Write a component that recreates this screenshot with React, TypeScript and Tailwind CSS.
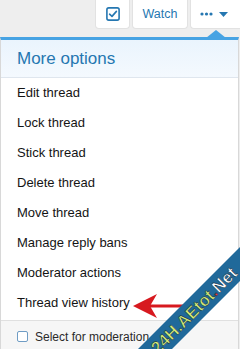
import React from 'react';

const items = [
  'Edit thread',
  'Lock thread',
  'Stick thread',
  'Delete thread',
  'Move thread',
  'Manage reply bans',
  'Moderator actions',
  'Thread view history',
];

function CheckSquare() {
  return (
    <svg width="14" height="14" viewBox="0 0 14 14" fill="none">
      <rect x="0.9" y="0.9" width="12.2" height="12.2" rx="1.8" stroke="#2577b1" strokeWidth="1.6" />
      <path d="M3.6 7.2 L6 9.4 L10.4 4.4" stroke="#2577b1" strokeWidth="1.6" strokeLinecap="round" strokeLinejoin="round" />
    </svg>
  );
}

function RedArrow() {
  return (
    <svg width="56" height="28" viewBox="0 0 56 28" className="absolute left-[131px] top-[292px]">
      <path d="M17 12.5 H52 V15.5 H17 Z" fill="#d7191f" />
      <path d="M2 14 L26 2 L19 14 L26 26 Z" fill="#d7191f" />
    </svg>
  );
}

function Watermark() {
  return (
    <div className="pointer-events-none absolute left-[72px] top-[300px] flex h-[24px] w-[240px] -rotate-45 items-center bg-[#20699a] pl-[66px]">
      <span
        className="whitespace-nowrap text-[17px] font-bold leading-none [font-family:'Liberation_Sans',Arial,sans-serif]"
        style={{ WebkitTextStroke: '0.6px #0d3550' }}
      >
        <span className="text-[#d6ec74]">24H.AEtot</span>
        <span className="text-[#e8413a]">.</span>
        <span className="text-white">Net</span>
      </span>
    </div>
  );
}

export default function App() {
  return (
    <div className="relative h-[349px] w-[240px] overflow-hidden bg-[#eeeeee] [font-family:'Liberation_Sans',Arial,sans-serif]">
      {/* top bar */}
      <div className="flex h-[37px] justify-end gap-[2px]">
        <div className="flex h-[29px] w-[35px] items-center justify-center rounded-b-[4px] border border-t-0 border-[#e2e2e2] bg-white">
          <CheckSquare />
        </div>
        <div className="flex h-[29px] w-[56px] items-center justify-center rounded-b-[4px] border border-t-0 border-[#e2e2e2] bg-white text-[12.5px] text-[#2577b1]">
          Watch
        </div>
        <div className="relative flex h-[29px] w-[50px] items-center justify-start gap-[6px] rounded-bl-[4px] border border-r-0 border-t-0 border-[#e2e2e2] bg-white pl-[9px] text-[#2577b1]">
          <svg width="13" height="4" viewBox="0 0 13 4">
            <circle cx="2" cy="2" r="1.6" fill="#2577b1" />
            <circle cx="6.5" cy="2" r="1.6" fill="#2577b1" />
            <circle cx="11" cy="2" r="1.6" fill="#2577b1" />
          </svg>
          <svg width="9" height="5" viewBox="0 0 9 5">
            <path d="M0 0 H9 L4.5 5 Z" fill="#2577b1" />
          </svg>
        </div>
      </div>

      {/* pointer */}
      <svg width="20" height="8" viewBox="0 0 20 8" className="absolute left-[206px] top-[30px]">
        <path d="M0 8 L10 0 L20 8 Z" fill="#47a3e3" />
      </svg>

      {/* menu */}
      <div className="mr-[1px] flex flex-col border-x border-[#d8d8d8] border-t-[3px] border-t-[#47a3e3] bg-white">
        <div className="flex h-[38px] items-center border-b border-[#dfe6ee] bg-gradient-to-b from-[#eaf4fd] to-[#f4f9fe] pl-[16px] text-[17px] text-[#2577b1]">
          More options
        </div>
        <div className="flex flex-col">
          {items.map((t) => (
            <div key={t} className="flex h-[30px] items-center pl-[16px] text-[13px] text-[#141414]">
              {t}
            </div>
          ))}
        </div>
        <div className="mt-[2px] flex h-[32px] items-center gap-[7px] border-t border-[#e0e0e0] bg-[#f6f6f6] pl-[16px] text-[12px] text-[#2a2a2a]">
          <div className="h-[11px] w-[11px] rounded-[2px] border border-[#6f9cc4] bg-white" />
          Select for moderation
        </div>
      </div>

      <RedArrow />
      <Watermark />
    </div>
  );
}
